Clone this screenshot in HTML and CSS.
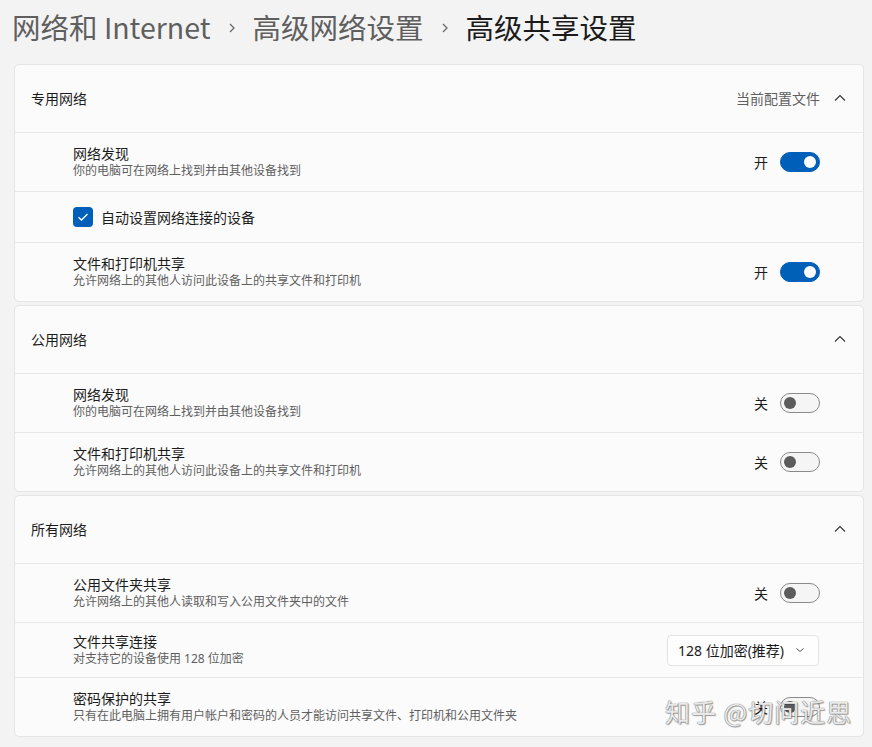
FILE: index.html
```html
<!DOCTYPE html>
<html lang="zh-CN">
<head>
    <meta charset="UTF-8">
    <meta name="viewport" content="width=device-width, initial-scale=1.0">
    <title>高级共享设置</title>
    <link rel="stylesheet" href="styles.css">
</head>
<body>
    <div class="page">
        <h1 class="crumbs">
            <span class="crumb">网络和 Internet</span>
            <svg class="crumb-sep" width="8" height="12" viewBox="0 0 8 12"><path d="M2 2 L6 6 L2 10" fill="none" stroke="#6a6a6a" stroke-width="1.3"/></svg>
            <span class="crumb">高级网络设置</span>
            <svg class="crumb-sep" width="8" height="12" viewBox="0 0 8 12"><path d="M2 2 L6 6 L2 10" fill="none" stroke="#6a6a6a" stroke-width="1.3"/></svg>
            <span class="crumb current">高级共享设置</span>
        </h1>

        <section class="group">
            <div class="group-head">
                <span class="group-title">专用网络</span>
                <span class="group-note">当前配置文件</span>
                <svg class="caret" width="12" height="8" viewBox="0 0 12 8"><path d="M1 6.5 L6 1.5 L11 6.5" fill="none" stroke="#333" stroke-width="1.1"/></svg>
            </div>
            <div class="item">
                <div class="item-text">
                    <div class="item-title">网络发现</div>
                    <div class="item-desc">你的电脑可在网络上找到并由其他设备找到</div>
                </div>
                <span class="state">开</span>
                <span class="switch on"></span>
            </div>
            <div class="item check-row">
                <span class="checkbox">
                    <svg width="12" height="10" viewBox="0 0 12 10"><path d="M1.5 5.2 L4.5 8 L10.5 2" fill="none" stroke="#fff" stroke-width="1.3"/></svg>
                </span>
                <span class="check-label">自动设置网络连接的设备</span>
            </div>
            <div class="item">
                <div class="item-text">
                    <div class="item-title">文件和打印机共享</div>
                    <div class="item-desc">允许网络上的其他人访问此设备上的共享文件和打印机</div>
                </div>
                <span class="state">开</span>
                <span class="switch on"></span>
            </div>
        </section>

        <section class="group">
            <div class="group-head">
                <span class="group-title">公用网络</span>
                <svg class="caret" width="12" height="8" viewBox="0 0 12 8"><path d="M1 6.5 L6 1.5 L11 6.5" fill="none" stroke="#333" stroke-width="1.1"/></svg>
            </div>
            <div class="item">
                <div class="item-text">
                    <div class="item-title">网络发现</div>
                    <div class="item-desc">你的电脑可在网络上找到并由其他设备找到</div>
                </div>
                <span class="state">关</span>
                <span class="switch"></span>
            </div>
            <div class="item">
                <div class="item-text">
                    <div class="item-title">文件和打印机共享</div>
                    <div class="item-desc">允许网络上的其他人访问此设备上的共享文件和打印机</div>
                </div>
                <span class="state">关</span>
                <span class="switch"></span>
            </div>
        </section>

        <section class="group">
            <div class="group-head">
                <span class="group-title">所有网络</span>
                <svg class="caret" width="12" height="8" viewBox="0 0 12 8"><path d="M1 6.5 L6 1.5 L11 6.5" fill="none" stroke="#333" stroke-width="1.1"/></svg>
            </div>
            <div class="item">
                <div class="item-text">
                    <div class="item-title">公用文件夹共享</div>
                    <div class="item-desc">允许网络上的其他人读取和写入公用文件夹中的文件</div>
                </div>
                <span class="state">关</span>
                <span class="switch"></span>
            </div>
            <div class="item short">
                <div class="item-text">
                    <div class="item-title">文件共享连接</div>
                    <div class="item-desc">对支持它的设备使用 128 位加密</div>
                </div>
                <div class="select">
                    <span>128 位加密(推荐)</span>
                    <svg width="10" height="6" viewBox="0 0 10 6"><path d="M1.5 1.5 L5 4.5 L8.5 1.5" fill="none" stroke="#555" stroke-width="1"/></svg>
                </div>
            </div>
            <div class="item">
                <div class="item-text">
                    <div class="item-title">密码保护的共享</div>
                    <div class="item-desc">只有在此电脑上拥有用户帐户和密码的人员才能访问共享文件、打印机和公用文件夹</div>
                </div>
                <span class="state">关</span>
                <span class="switch"></span>
            </div>
        </section>

        <div class="watermark">知乎 @切问近思</div>
    </div>
</body>
</html>
```

FILE: styles.css
```css
body {
    margin: 0;
    padding: 0;
    background-color: #f3f3f3;
    font-family: "Noto Sans", "Noto Sans CJK SC", sans-serif;
    color: #1b1b1b;
}
.page {
    position: relative;
    width: 850px;
    margin-left: 14px;
    padding-top: 7px;
    height: 740px;
}
.crumbs {
    display: flex;
    align-items: center;
    margin: 0 0 17px -2px;
    font-family: "Noto Sans CJK SC", sans-serif;
    font-size: 28.5px;
    font-weight: 400;
    line-height: 40px;
    height: 40px;
}
.crumb {
    color: #5f5f5f;
    white-space: nowrap;
}
.crumb.current {
    color: #1b1b1b;
}
.crumb-sep {
    margin: 2px 16px 0 18px;
}
.group {
    background-color: #fbfbfb;
    border: 1px solid #e5e5e5;
    border-radius: 5px;
    margin-bottom: 3px;
}
.group-head {
    display: flex;
    align-items: center;
    height: 66px;
    padding: 0 17px 1px 16px;
    font-size: 14px;
}
.group-title {
    flex: 1;
}
.group-note {
    color: #5f5f5f;
    margin-right: 14px;
}
.caret {
    display: block;
}
.item {
    display: flex;
    align-items: center;
    height: 58px;
    padding: 0 43px 0 58px;
    border-top: 1px solid #e8e8e8;
}
.item.short {
    height: 54px;
}
.item.check-row {
    height: 50px;
}
.item-text {
    flex: 1;
}
.item-title {
    font-size: 14px;
    line-height: 18px;
}
.item-desc {
    font-size: 12px;
    line-height: 16px;
    color: #5f5f5f;
}
.state {
    font-size: 14px;
    margin-right: 12px;
}
.switch {
    position: relative;
    box-sizing: border-box;
    width: 40px;
    height: 20px;
    border-radius: 10px;
    border: 1px solid #8a8a8a;
    background-color: #f5f5f5;
}
.switch::after {
    content: "";
    position: absolute;
    top: 3px;
    left: 3px;
    width: 12px;
    height: 12px;
    border-radius: 50%;
    background-color: #5c5c5c;
}
.switch.on {
    background-color: #005fb8;
    border-color: #005fb8;
}
.switch.on::after {
    left: auto;
    right: 3px;
    background-color: #fff;
}
.checkbox {
    display: flex;
    align-items: center;
    justify-content: center;
    width: 20px;
    height: 20px;
    border-radius: 4px;
    background-color: #005fb8;
    margin-right: 8px;
}
.check-label {
    font-size: 14px;
}
.select {
    display: flex;
    align-items: center;
    box-sizing: border-box;
    width: 152px;
    height: 31px;
    padding: 0 13px 0 10px;
    background-color: #fefefe;
    border: 1px solid #e3e3e3;
    border-radius: 4px;
    font-size: 14px;
    margin-right: 1px;
}
.select span {
    flex: 1;
}
.watermark {
    position: absolute;
    left: 651px;
    top: 693px;
    font-family: "Noto Sans CJK SC", sans-serif;
    font-size: 25px;
    line-height: 36px;
    letter-spacing: 1px;
    color: rgba(255, 255, 255, 0.85);
    text-shadow: 0 0 1px #777, 0 0 1px #777, 1px 1px 1px rgba(0, 0, 0, 0.35);
    white-space: nowrap;
}
```
